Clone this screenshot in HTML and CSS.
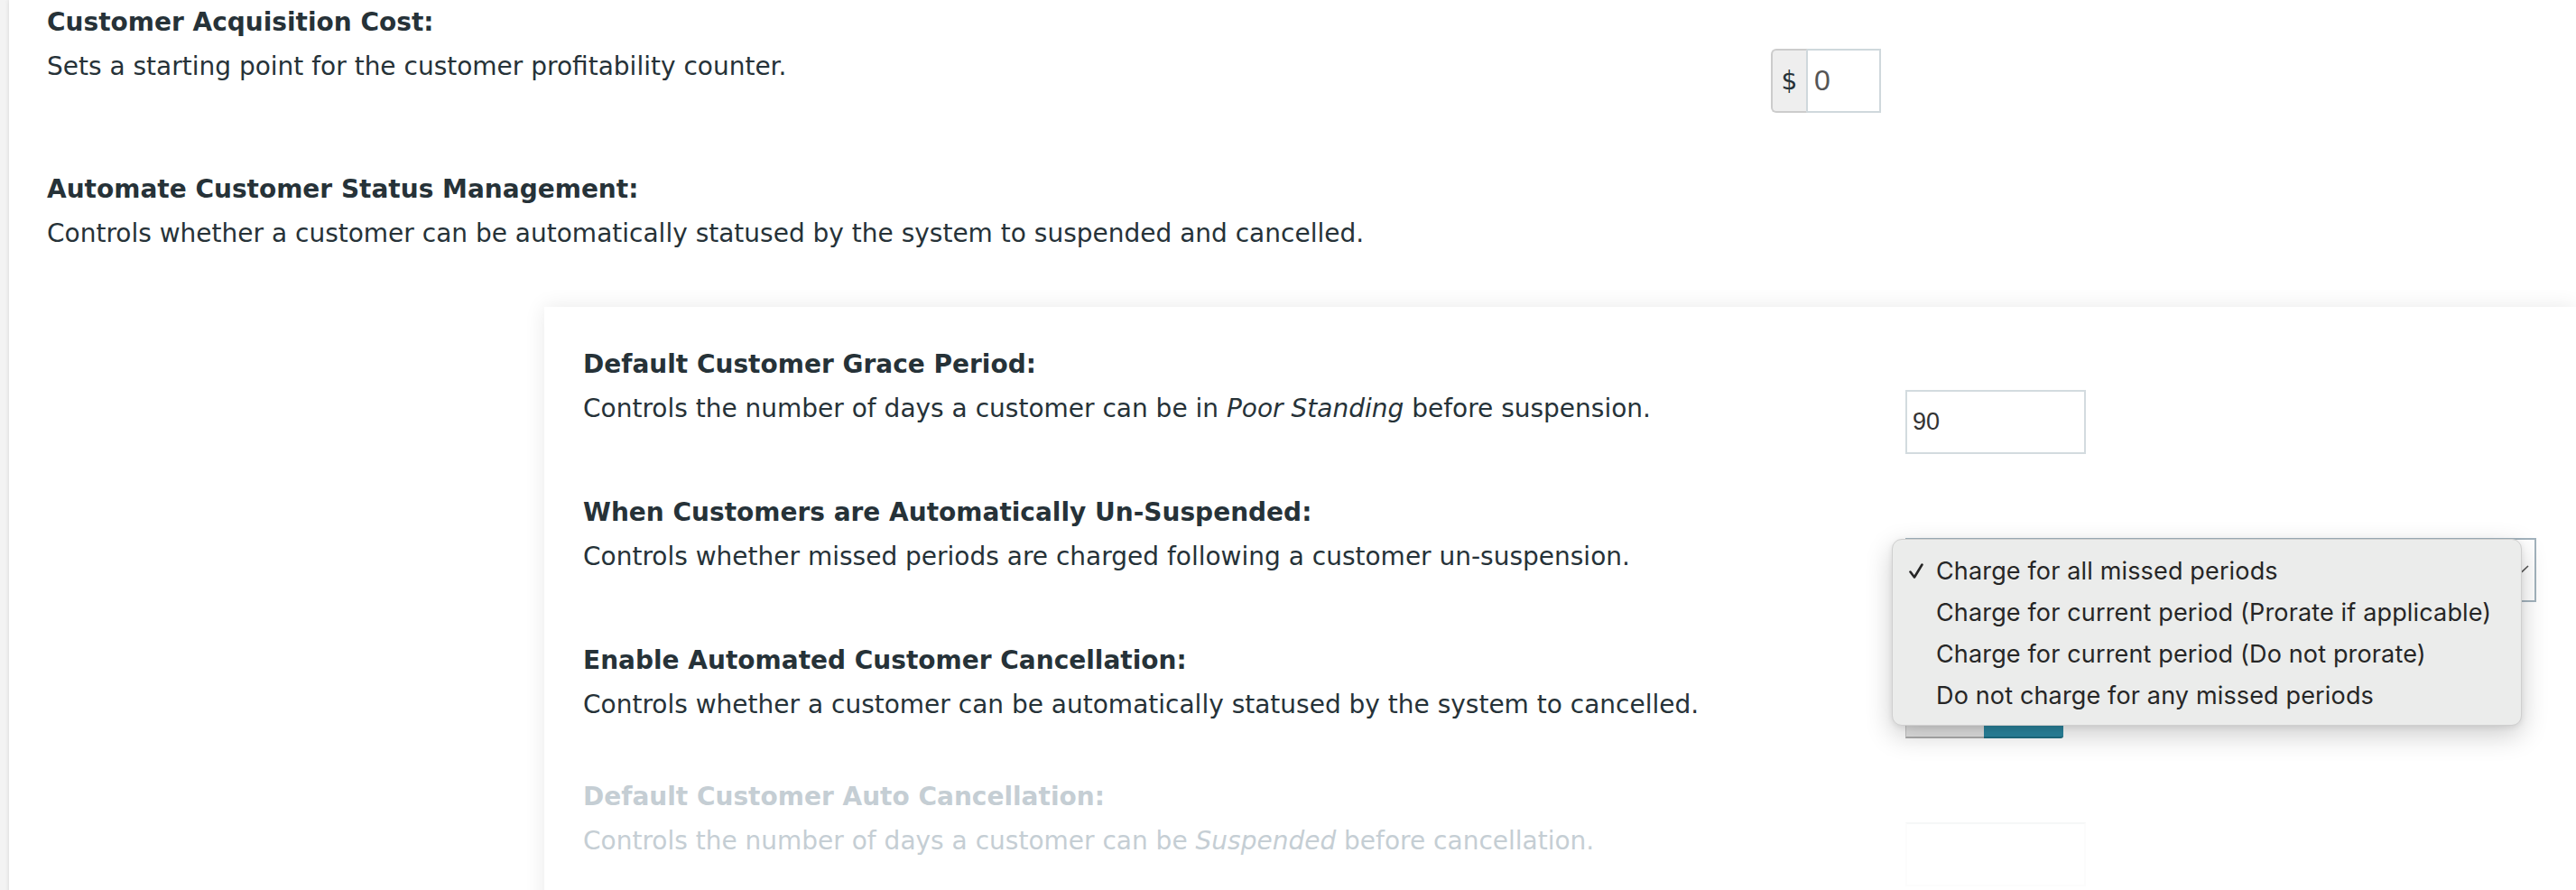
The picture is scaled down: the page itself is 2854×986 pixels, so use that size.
FILE: index.html
```html
<!DOCTYPE html>
<html lang="en">
<head>
<meta charset="utf-8">
<title>Customer settings</title>
<link rel="stylesheet" href="styles.css">
</head>
<body>
<div class="panel">
  <section class="row">
    <div class="label">
      <h4 class="title">Customer Acquisition Cost:</h4>
      <p class="desc">Sets a starting point for the customer profitability counter.</p>
    </div>
    <div class="ctl ctl-top">
      <div class="input-group">
        <span class="addon">$</span>
        <input class="money" type="text" value="0">
      </div>
    </div>
  </section>

  <section class="row row-auto">
    <div class="label">
      <h4 class="title">Automate Customer Status Management:</h4>
      <p class="desc">Controls whether a customer can be automatically statused by the system to suspended and cancelled.</p>
    </div>
    <div class="ctl"></div>
  </section>

  <div class="card">
    <section class="row">
      <div class="label">
        <h4 class="title">Default Customer Grace Period:</h4>
        <p class="desc">Controls the number of days a customer can be in <em>Poor Standing</em> before suspension.</p>
      </div>
      <div class="ctl">
        <input class="num" type="text" value="90">
      </div>
    </section>

    <section class="row">
      <div class="label">
        <h4 class="title">When Customers are Automatically Un-Suspended:</h4>
        <p class="desc">Controls whether missed periods are charged following a customer un-suspension.</p>
      </div>
      <div class="ctl">
        <div class="select">
          <svg class="chev" width="18" height="10" viewBox="0 0 18 10"><path d="M1 1 L9 8.5 L17 1" fill="none" stroke="#555" stroke-width="1.6"/></svg>
          <ul class="menu">
            <li class="opt checked"><svg class="check" width="16" height="17" viewBox="0 0 16 17"><path d="M1.5 9.5 L6 15.5 L14.5 1.5" fill="none" stroke="#262626" stroke-width="2.6" stroke-linecap="round" stroke-linejoin="round"/></svg>Charge for all missed periods</li>
            <li class="opt">Charge for current period (Prorate if applicable)</li>
            <li class="opt">Charge for current period (Do not prorate)</li>
            <li class="opt">Do not charge for any missed periods</li>
          </ul>
        </div>
      </div>
    </section>

    <section class="row">
      <div class="label">
        <h4 class="title">Enable Automated Customer Cancellation:</h4>
        <p class="desc">Controls whether a customer can be automatically statused by the system to cancelled.</p>
      </div>
      <div class="ctl">
        <div class="toggle">
          <span class="tg-off"></span>
          <span class="tg-on"></span>
        </div>
      </div>
    </section>

    <section class="row disabled">
      <div class="label">
        <h4 class="title">Default Customer Auto Cancellation:</h4>
        <p class="desc">Controls the number of days a customer can be <em>Suspended</em> before cancellation.</p>
      </div>
      <div class="ctl">
        <input class="num num-off" type="text" value="" disabled>
      </div>
    </section>
  </div>
</div>
</body>
</html>
```

FILE: styles.css
```css
html, body {
  margin: 0;
  padding: 0;
}

body {
  background: #f3f3f3;
  font-family: "DejaVu Sans", Verdana, sans-serif;
  color: #263238;
  overflow: hidden;
  height: 986px;
}

.panel {
  margin-left: 10px;
  min-height: 986px;
  background: #ffffff;
  box-shadow: 0 0 5px rgba(0, 0, 0, 0.13);
  padding: 6px 0 0 42px;
  box-sizing: border-box;
}

.row {
  display: grid;
  grid-template-columns: 1910px 1fr;
  align-items: start;
}

.title {
  font-size: 28px;
  font-weight: bold;
  line-height: 38px;
  margin: 0 0 11px;
}

.desc {
  font-size: 28px;
  line-height: 38px;
  margin: 0;
}

.ctl-top {
  margin-top: 48px;
}

.row-auto {
  margin-top: 66px;
}

/* $ input group */
.input-group {
  display: flex;
  height: 71px;
}

.addon {
  width: 40px;
  box-sizing: border-box;
  background: #eeeeee;
  border: 2px solid #cccccc;
  border-right: 1px solid #cfd8dc;
  border-radius: 6px 0 0 6px;
  display: flex;
  align-items: center;
  justify-content: center;
  font-size: 28px;
  color: #263238;
}

.money {
  width: 82px;
  height: 71px;
  box-sizing: border-box;
  border: 2px solid #cfd8dc;
  border-left: 1px solid #cfd8dc;
  padding: 0 7px;
  font-family: "Liberation Sans", Arial, sans-serif;
  font-size: 32px;
  color: #555555;
  outline: none;
  margin: 0;
}

/* inner card */
.card {
  margin: 62px 0 0 551px;
  background: #ffffff;
  box-shadow: 0 0 22px rgba(0, 0, 0, 0.09);
  padding: 45px 0 0 43px;
  min-height: 700px;
}

.card .row {
  grid-template-columns: 1465px 1fr;
  margin-bottom: 46px;
}

.card .ctl {
  margin-top: 47px;
}

.num {
  width: 200px;
  height: 71px;
  box-sizing: border-box;
  border: 2px solid #d3dbdf;
  padding: 0 6px;
  font-family: "Liberation Sans", Arial, sans-serif;
  font-size: 27px;
  color: #333333;
  background: #ffffff;
  outline: none;
  margin: 0;
}

.num-off {
  border-color: #f6f7f7 #fcfcfc #fcfcfc #fcfcfc;
}

/* select with open menu */
.select {
  position: relative;
  width: 699px;
  height: 71px;
  box-sizing: border-box;
  border: 2px solid #a3b3bd;
  background: #ffffff;
}

.chev {
  position: absolute;
  right: 6px;
  top: 28px;
}

.menu {
  position: absolute;
  z-index: 10;
  left: -17px;
  top: -1px;
  width: 698px;
  margin: 0;
  padding: 12px 0 9px;
  box-sizing: border-box;
  list-style: none;
  background: #ebeceb;
  border: 1px solid #cfcfcf;
  border-radius: 11px;
  box-shadow: 0 10px 30px rgba(0, 0, 0, 0.2), 0 2px 6px rgba(0, 0, 0, 0.08);
  font-family: Inter, "Noto Sans", sans-serif;
  font-size: 27px;
  letter-spacing: 0.15px;
  color: #262626;
}

.opt {
  position: relative;
  line-height: 46px;
  padding-left: 48px;
  white-space: nowrap;
}

.check {
  position: absolute;
  left: 18px;
  top: 14px;
}

/* toggle partially hidden by menu */
.toggle {
  display: flex;
  width: 175px;
  height: 58px;
}

.tg-off {
  width: 86px;
  background: #e3e3e3;
  border-left: 1px solid #c4c4c4;
  border-bottom: 2px solid #acacac;
}

.tg-on {
  flex: 1;
  background: #2b87a0;
  border-bottom: 2px solid #1e6d82;
  border-radius: 0 0 3px 0;
}

.disabled .title,
.disabled .desc {
  color: #c5ced4;
}
```
